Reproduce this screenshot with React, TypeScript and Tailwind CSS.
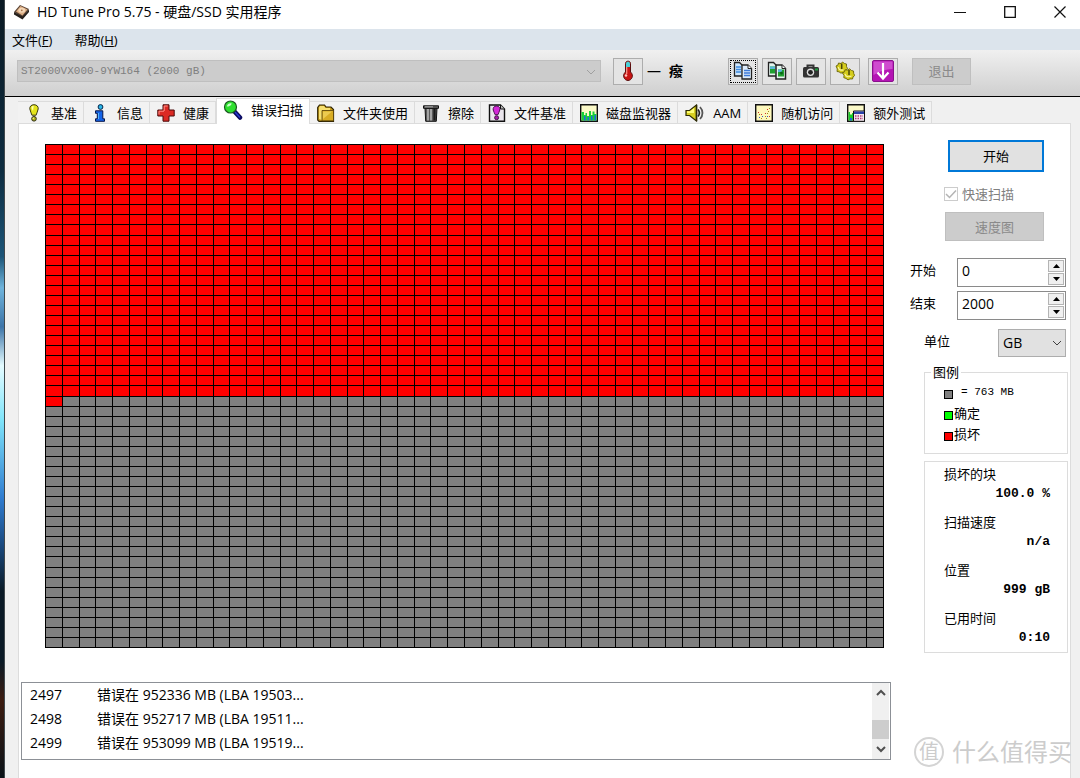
import { type ReactNode } from 'react'

const UI = "font-['Open_Sans','Noto_Sans_CJK_SC',sans-serif]"
const MONO = "font-['Liberation_Mono','Noto_Sans_CJK_SC',monospace]"

const COLS = 50
const ROWS = 50
const CELL_W = 16.76
const CELL_H = 10.06
const DAMAGED = 1251

/* ---------- icons ---------- */

function AppIcon() {
  return (
    <svg width="18" height="18" viewBox="0 0 18 18" aria-hidden="true">
      <path d="M1 9 7 2l9 4-6 9z" fill="#5a4334" />
      <path d="M3 8.500 7.500 3l7 3.500-5 6z" fill="#dcae84" />
      <path d="M1 9v2.500l8.500 5L16 9V6.500l-6.500 7z" fill="#26201c" />
      <ellipse cx="8.800" cy="7.300" rx="3.400" ry="2.500" fill="#f4d6b6" />
      <circle cx="8.800" cy="7.300" r=".9" fill="#a5714a" />
    </svg>
  )
}

function BenchmarkIcon() {
  return (
    <svg width="18" height="18" viewBox="0 0 18 18" aria-hidden="true">
      <path d="M9 .7c3 0 4.400 2 4.200 4.200-.3 2.400-1.700 4.200-2.100 6.300H6.900C6.500 9.100 5.100 7.300 4.800 4.900 4.600 2.700 6 .7 9 .7z" fill="#e4e41a" stroke="#3a3a10" />
      <path d="M6.500 4c.2-1.400 1-2.200 2.200-2.200L8 7z" fill="#ffffb0" />
      <circle cx="9" cy="14.800" r="2.300" fill="#b4b41a" stroke="#2a2a10" />
      <circle cx="8.300" cy="14.200" r=".8" fill="#f4f490" />
    </svg>
  )
}

function InfoIcon() {
  return (
    <svg width="18" height="18" viewBox="0 0 18 18" aria-hidden="true">
      <circle cx="9.500" cy="3" r="2.400" fill="#29b6e8" stroke="#06264a" />
      <path d="M4.500 6.800h7.300v8h1.700v2.500H4.500v-2.500h1.800V9.300H4.500z" fill="#1464e8" stroke="#06164a" />
      <path d="M7.500 9v6" stroke="#4fb4ff" />
    </svg>
  )
}

function HealthIcon() {
  return (
    <svg width="18" height="18" viewBox="0 0 18 18" aria-hidden="true">
      <path d="M6 .8h6v5.200h5.200v6H12v5.200H6V12H.8V6H6z" fill="#dc2a24" stroke="#4a0a0a" />
      <path d="M7.200 7V2h3.500M2 10.500V7.200h5" stroke="#ff9088" fill="none" />
    </svg>
  )
}

function ScanIcon() {
  return (
    <svg width="20" height="20" viewBox="0 0 20 20" aria-hidden="true">
      <path d="m11 11 6 6.500" stroke="#0a0a60" strokeWidth="4.500" strokeLinecap="round" />
      <path d="m12 12 5 5.500" stroke="#2a3ad0" strokeWidth="1.500" />
      <circle cx="7.500" cy="7" r="6" fill="#2fe02f" stroke="#1a5a20" strokeWidth="1.200" />
      <path d="M3.800 6.500C4.200 4 6.500 2.800 8.500 3.300c.6 1.500-2.500 3.800-4.700 3.200z" fill="#c8ffc8" />
    </svg>
  )
}

function FolderIcon() {
  return (
    <svg width="18" height="18" viewBox="0 0 18 18" aria-hidden="true">
      <path d="M.7 16V3.500L2.500 1h5L9 3h5l2.500 2.500v11.800H2z" fill="#c89c18" stroke="#2e2404" strokeWidth="1.200" />
      <path d="M2 3.500 3 2h4l1.500 2H13v2H5v10L2 15z" fill="#f7e070" />
      <path d="M5 6.500h11.500v10.300H5z" fill="#d8ac24" stroke="#54400a" strokeWidth=".8" />
      <path d="M6 7.500h9L6 15z" fill="#eccb50" />
    </svg>
  )
}

function TrashIcon() {
  return (
    <svg width="18" height="18" viewBox="0 0 18 18" aria-hidden="true">
      <path d="M3 4h12l-.7 13.300H3.700z" fill="#5c5c5c" stroke="#111" />
      <path d="M6 5v11.500M9 5v11.500" stroke="#c4c4c4" strokeWidth="1.400" />
      <path d="M12.500 5v11.500" stroke="#1a1a1a" strokeWidth="2.200" />
      <path d="M1.500 1.800h15v2.500h-15z" fill="#666" stroke="#111" />
      <path d="M3 2.800h8" stroke="#aaa" />
    </svg>
  )
}

function FileBenchIcon() {
  return (
    <svg width="18" height="18" viewBox="0 0 18 18" aria-hidden="true">
      <path d="M1.500 1h11l4 4v12.300h-15z" fill="#e9e5ec" stroke="#111" strokeWidth="1.400" />
      <path d="M12.500 1v4h4" fill="#bbb" stroke="#111" />
      <path d="M8.500 2c2.700 0 3.700 1.900 3.300 4-.3 1.900-1.500 3-1.800 4.700H7.100C6.800 9 5.500 7.900 5.200 6 4.900 3.900 5.900 2 8.500 2z" fill="#d428d8" stroke="#3c0840" strokeWidth=".9" />
      <circle cx="8.600" cy="13.700" r="2" fill="#a41ca8" stroke="#3c0840" strokeWidth=".9" />
    </svg>
  )
}

function MonitorIcon() {
  return (
    <svg width="18" height="18" viewBox="0 0 18 18" aria-hidden="true">
      <path d="M.7.7h16.600v16.600H.7z" fill="#fbf9c8" stroke="#111" strokeWidth="1.400" />
      <path d="M1.500 16.500V8H4v3h1.500V9H7v3h2V7h2v4h1.500V7.500h2V10h2v6.500z" fill="#18d038" />
      <path d="M4 16.500V12h1.500v4.500zM7.500 16.500V13h1.500v3.500zM11 16.500V12h1.500v4.500zM14.500 16.500V11H16v5.500z" fill="#1f6ad8" />
    </svg>
  )
}

function SpeakerIcon() {
  return (
    <svg width="20" height="18" viewBox="0 0 20 18" aria-hidden="true">
      <path d="M1 6.500h3.500L11.500 1v16l-7-5.500H1z" fill="#d8d020" stroke="#2c2a06" strokeWidth="1.200" />
      <path d="M2 7.200h3L9 4v5H2z" fill="#ffff78" />
      <path d="M11.500 1v16" stroke="#2c2a06" strokeWidth="1.600" />
      <path d="M13 5.500c1.600 2 1.600 5 0 7" fill="none" stroke="#222" strokeWidth="1.600" />
      <path d="M15 3c3.300 3.500 3.300 8.500 0 12" fill="none" stroke="#555" strokeWidth="1.800" />
    </svg>
  )
}

function RandomIcon() {
  return (
    <svg width="18" height="18" viewBox="0 0 18 18" aria-hidden="true">
      <path d="M.7.7h16.600v16.600H.7z" fill="#fdf8bc" stroke="#111" strokeWidth="1.400" />
      <path d="M3 8h1v1H3zM6 10h1v1H6zM12 5h1v1h-1zM10 9h1v1h-1zM14 12h1v1h-1z" fill="#d03030" />
      <path d="M7 12h1v1H7zM4 13h1v1H4zM12 12h1v1h-1z" fill="#3858c8" />
      <path d="M10 12h1v1h-1zM13 7h1v1h-1zM12 9h1v1h-1zM14 4h1v1h-1zM4 10h1v1H4zM11 14h1v1h-1zM6 14h1v1H6z" fill="#a08818" />
    </svg>
  )
}

function ExtraIcon() {
  return (
    <svg width="18" height="18" viewBox="0 0 18 18" aria-hidden="true">
      <path d="M.7.7h16.600v16.600H.7z" fill="#fbf9c8" stroke="#111" strokeWidth="1.400" />
      <path d="M1.500 16.500V8H3v2.500h2V9h1.500v7.500z" fill="#18c828" />
      <path d="M3 16.500V14h2v2.500z" fill="#1f62d8" />
      <path d="M6.500 7h11v10.300h-11z" fill="#f4e8f0" stroke="#111" />
      <path d="M7 7.500h10V10H7z" fill="#2840a8" />
      <path d="M8 12h8M8 14.500h8" stroke="#b03878" strokeWidth="1.300" strokeDasharray="1.500 1" />
    </svg>
  )
}

function ThermometerIcon() {
  return (
    <svg width="20" height="22" viewBox="0 0 20 22" aria-hidden="true">
      <path d="M7.500 3.500C7.500.4 12.500.4 12.500 3.500V12c4 3.500 1 8.500-2.500 8.500S3.500 15.500 7.500 12z" fill="#c81414" stroke="#5a1010" />
      <path d="M8 3.500C8 1 12 1 12 3.500V7H8z" fill="#48d0d8" />
      <path d="M8.700 7v7" stroke="#ff9a90" strokeWidth="1.200" />
      <circle cx="8" cy="15.500" r="1.300" fill="#ffc0b8" />
    </svg>
  )
}

function CopyTextIcon() {
  return (
    <svg width="20" height="20" viewBox="0 0 20 20" aria-hidden="true">
      <path d="M1.500 1.500h5l3 3V15h-8z" fill="#cfe6fb" stroke="#222" strokeWidth="1.300" />
      <path d="M3 6h5M3 8.500h5M3 11h5" stroke="#3c8ae0" strokeWidth="1.300" />
      <path d="M9 4h6l3.500 3.500V18H9z" fill="#dcebfa" stroke="#222" strokeWidth="1.300" />
      <path d="M15 4v3.500h3.500" fill="#fff" stroke="#222" />
      <path d="M11 9.500h6M11 12h6M11 14.500h6" stroke="#3c7ad8" strokeWidth="1.300" />
    </svg>
  )
}

function CopyImageIcon() {
  return (
    <svg width="20" height="20" viewBox="0 0 20 20" aria-hidden="true">
      <path d="M1.500 1.500h5l3 3V15h-8z" fill="#e4f4ee" stroke="#222" strokeWidth="1.300" />
      <path d="M3 5.500h5v7H3z" fill="#20a030" />
      <path d="M3 5.500h5V8H3z" fill="#58b8d8" />
      <path d="M9 4h6l3.500 3.500V18H9z" fill="#e4f4ee" stroke="#222" strokeWidth="1.500" />
      <path d="M15 4v3.500h3.500" fill="#fff" stroke="#222" />
      <path d="M11 8.500h6v7h-6z" fill="#20a030" />
      <path d="M11 8.500h4V11h-4z" fill="#58b8d8" />
      <circle cx="14.500" cy="12" r="1.500" fill="#0a6818" />
    </svg>
  )
}

function CameraIcon() {
  return (
    <svg width="20" height="20" viewBox="0 0 20 20" aria-hidden="true">
      <path d="M6.500 6V4.500h6V6" fill="none" stroke="#333" strokeWidth="2" />
      <rect x="2" y="6" width="16" height="10.500" rx="1.500" fill="#333" />
      <circle cx="9.500" cy="11.300" r="3.700" fill="#ddd" />
      <circle cx="9.500" cy="11.300" r="2.400" fill="#222" />
      <path d="M14 7.500h3v2h-3z" fill="#20a040" />
    </svg>
  )
}

function OptionsIcon() {
  return (
    <svg width="20" height="20" viewBox="0 0 20 20" aria-hidden="true">
      <g fill="#d4cc1c" stroke="#6a640a" strokeWidth=".9">
        <path d="m1 5 2-1 .5-2 2.500.5L7.500 1l2 1.500L11.500 3v2.500l1 2-1.500 2-.5 2-2.500-.3-2 1-2-1.400L2 10.500l.3-2.500z" />
        <path d="m7.500 12 2-1.200.5-2 2.500.2 2-1.200 2 1.700 2 .5.200 2.500 1 2-1.700 1.500-.5 2-2.500-.1-2 1-2-1.500-2.200-.7L9 14.500z" />
      </g>
      <path d="M6.700 2.500V8M14 9v5" stroke="#4a4608" strokeWidth="1.500" />
      <path d="M3.300 6c.2 2.500 2.200 3.700 5.200 3M10 13c.7 2.700 3.500 3.500 6.500 2" fill="none" stroke="#f8f4a0" strokeWidth="1.200" />
    </svg>
  )
}

function DownloadIcon() {
  return (
    <svg width="22" height="22" viewBox="0 0 22 22" aria-hidden="true">
      <rect x=".5" y=".5" width="21" height="21" rx="1.500" fill="#b414b4" stroke="#8a108c" />
      <path d="M1.500 1.500h19V9c-6 0-13 2-19 6z" fill="#cf4ccf" />
      <path d="M11 3v14M5.500 12.500 11 18.500l5.500-6" fill="none" stroke="#fff" strokeWidth="2.200" />
    </svg>
  )
}

function Chevron({ up = false, className = '' }: { up?: boolean; className?: string }) {
  return (
    <svg width="10" height="8" viewBox="0 0 10 8" fill="none" stroke="currentColor" className={className} aria-hidden="true">
      <path d={up ? 'm1 6 4-4 4 4' : 'm1 2 4 4 4-4'} />
    </svg>
  )
}

/* ---------- data ---------- */

interface Tab {
  label: string
  icon: ReactNode
  active?: boolean
}

const TABS: Tab[] = [
  { label: '基准', icon: <BenchmarkIcon /> },
  { label: '信息', icon: <InfoIcon /> },
  { label: '健康', icon: <HealthIcon /> },
  { label: '错误扫描', icon: <ScanIcon />, active: true },
  { label: '文件夹使用', icon: <FolderIcon /> },
  { label: '擦除', icon: <TrashIcon /> },
  { label: '文件基准', icon: <FileBenchIcon /> },
  { label: '磁盘监视器', icon: <MonitorIcon /> },
  { label: 'AAM', icon: <SpeakerIcon /> },
  { label: '随机访问', icon: <RandomIcon /> },
  { label: '额外测试', icon: <ExtraIcon /> },
]

const ERRORS = [
  { id: 2497, text: '错误在 952336 MB (LBA 19503...' },
  { id: 2498, text: '错误在 952717 MB (LBA 19511...' },
  { id: 2499, text: '错误在 953099 MB (LBA 19519...' },
]

const STATS = [
  { label: '损坏的块', value: '100.0 %' },
  { label: '扫描速度', value: 'n/a' },
  { label: '位置', value: '999 gB' },
  { label: '已用时间', value: '0:10' },
]

/* ---------- parts ---------- */

function TitleBar() {
  return (
    <header className="flex h-[29px] items-start justify-between bg-white pl-2">
      <div className="flex h-6 items-center gap-1.5">
        <AppIcon />
        <h1 className="text-[14px] leading-5 text-black">HD Tune Pro 5.75 - 硬盘/SSD 实用程序</h1>
      </div>
      <div className="flex h-6 items-center gap-[10px]">
        <button type="button" aria-label="Minimize" className="flex w-10 justify-center">
          <svg width="12" height="12" viewBox="0 0 12 12" stroke="#111"><path d="M0 6.500h12" /></svg>
        </button>
        <button type="button" aria-label="Maximize" className="flex w-10 justify-center">
          <svg width="12" height="12" viewBox="0 0 12 12" fill="none" stroke="#111" strokeWidth="1.300"><path d="M.7.7h10.600v10.600H.7z" /></svg>
        </button>
        <button type="button" aria-label="Close" className="flex w-10 justify-center">
          <svg width="12" height="12" viewBox="0 0 12 12" stroke="#111" strokeWidth="1.200"><path d="m.5.5 11 11M11.500.5l-11 11" /></svg>
        </button>
      </div>
    </header>
  )
}

function MenuBar() {
  return (
    <nav className="flex h-[21px] items-center gap-[22px] bg-[#dce4ec] pl-[7px] text-[13px] leading-5 text-black">
      <button type="button">文件(<u>F</u>)</button>
      <button type="button">帮助(<u>H</u>)</button>
    </nav>
  )
}

function ToolButton({ label, focused, children }: { label: string; focused?: boolean; children: ReactNode }) {
  return (
    <button
      type="button"
      aria-label={label}
      className="flex h-[27px] w-[30px] items-center justify-center border border-[#adadad] bg-[#e4e4e4] p-px"
    >
      <span
        className={[
          'flex h-full w-full items-center justify-center',
          focused ? 'border border-dotted border-black' : '',
        ].join(' ')}
      >
        {children}
      </span>
    </button>
  )
}

function Toolbar() {
  return (
    <div className="flex h-[47px] items-center border-b border-black bg-linear-to-b from-[#f0f0f0] to-[#cfcfcf] pr-[109px] pb-1 pl-3">
      <div className="relative flex-1">
        <select
          disabled
          aria-label="Drive"
          className={`${MONO} block h-[22px] w-full appearance-none border border-[#bfbfbf] bg-[#cccccc] pl-[3px] text-[11px] text-[#808080] opacity-100`}
        >
          <option>ST2000VX000-9YW164 (2000 gB)</option>
        </select>
        <Chevron className="pointer-events-none absolute top-2 right-[5px] text-[#a0a0a0]" />
      </div>
      <div className="ml-3 flex items-center">
        <ToolButton label="Temperature"><ThermometerIcon /></ToolButton>
        <span className="ml-1 flex w-[81px] items-center gap-2 text-[14px] leading-5 text-black">
          <span>—</span>
          <span className="font-bold">癈</span>
        </span>
      </div>
      <div className="flex items-center gap-1">
        <ToolButton label="Copy text" focused><CopyTextIcon /></ToolButton>
        <ToolButton label="Copy image"><CopyImageIcon /></ToolButton>
        <ToolButton label="Screenshot"><CameraIcon /></ToolButton>
        <ToolButton label="Options"><OptionsIcon /></ToolButton>
      </div>
      <div className="ml-2 flex items-center gap-[14px]">
        <ToolButton label="Save"><DownloadIcon /></ToolButton>
        <button type="button" disabled className="h-[27px] w-[59px] border border-[#bfbfbf] bg-[#cccccc] text-[13px] leading-5 text-[#8a8a8a]">
          退出
        </button>
      </div>
    </div>
  )
}

function TabStrip() {
  return (
    <div role="tablist" className="flex h-[26px] items-end pl-[13px] text-[13px] leading-5 text-black">
      {TABS.map((tab) => (
        <button
          key={tab.label}
          type="button"
          role="tab"
          aria-selected={!!tab.active}
          className={[
            'flex items-center gap-2 whitespace-nowrap pr-[6px]',
            tab.active
              ? 'relative z-10 -mb-px h-[26px] border-x border-t border-[#dcdcdc] bg-white pb-1 pl-[6px]'
              : 'h-[22px] border-t border-r border-[#dcdcdc] bg-[#f2f2f2] pl-[7px]',
          ].join(' ')}
        >
          {tab.icon}
          <span>{tab.label}</span>
        </button>
      ))}
    </div>
  )
}

function BlockMap() {
  const w = COLS * CELL_W
  const h = ROWS * CELL_H
  const fullRows = Math.floor(DAMAGED / COLS)
  const rest = DAMAGED % COLS

  return (
    <svg viewBox="0 0 839 504" className="block h-auto w-full" shapeRendering="crispEdges" role="img" aria-label="错误扫描">
      <rect width={w} height={h} fill="#808080" />
      <rect width={w} height={fullRows * CELL_H} fill="#ff0000" />
      <rect y={fullRows * CELL_H} width={rest * CELL_W} height={CELL_H} fill="#ff0000" />
      <g stroke="#000">
        {Array.from({ length: COLS + 1 }, (_, i) => {
          const x = Math.round(i * CELL_W) + 0.5
          return <line key={i} x1={x} x2={x} y1="0" y2={h + 1} />
        })}
        {Array.from({ length: ROWS + 1 }, (_, i) => {
          const y = Math.round(i * CELL_H) + 0.5
          return <line key={i} x1="0" x2={w + 1} y1={y} y2={y} />
        })}
      </g>
    </svg>
  )
}

function ErrorList() {
  return (
    <div className="flex h-[78px] border border-[#8c9096] bg-white pr-px">
      <div className="flex-1 overflow-hidden">
        <table className="text-[14px] text-black">
          <tbody>
            {ERRORS.map((row) => (
              <tr key={row.id} className="h-6">
                <td className="w-[75px] py-0 pl-2 leading-5">{row.id}</td>
                <td className="py-0 leading-5 whitespace-nowrap">{row.text}</td>
              </tr>
            ))}
          </tbody>
        </table>
      </div>
      <div className="flex w-[17px] flex-col bg-[#f0f0f0] text-[#505050]">
        <button type="button" aria-label="Scroll up" className="flex h-5 items-center justify-center">
          <Chevron up className="stroke-2" />
        </button>
        <div className="flex flex-1 flex-col justify-end">
          <div className="h-[19px] bg-[#cdcdcd]" />
        </div>
        <button type="button" aria-label="Scroll down" className="flex h-5 items-center justify-center">
          <Chevron className="stroke-2" />
        </button>
      </div>
    </div>
  )
}

function SpinField({ id, label, value }: { id: string; label: string; value: string }) {
  return (
    <div className="flex items-center justify-between pr-[2px]">
      <label htmlFor={id} className="pb-1.5">{label}</label>
      <div className="flex h-[29px] w-[109px] border border-[#8a8a8a] bg-white">
        <input id={id} type="text" defaultValue={value} className="w-full min-w-0 flex-1 pb-1 pl-1 text-[14px] outline-none" />
        <div className="flex w-[18px] flex-col gap-px p-px">
          <button type="button" aria-label="Increase" className="flex flex-1 items-center justify-center border border-[#b4b4b4] bg-[#f0f0f0]">
            <svg width="7" height="4" viewBox="0 0 7 4"><path d="M0 4 3.500 0 7 4z" /></svg>
          </button>
          <button type="button" aria-label="Decrease" className="flex flex-1 items-center justify-center border border-[#b4b4b4] bg-[#f0f0f0]">
            <svg width="7" height="4" viewBox="0 0 7 4"><path d="m0 0 3.500 4L7 0z" /></svg>
          </button>
        </div>
      </div>
    </div>
  )
}

function Legend() {
  const swatch = 'size-[9px] border border-black'
  return (
    <fieldset className="ml-[14px] h-[92px] border border-[#dcdcdc] pl-[19px]">
      <legend className="-ml-[13px] px-[2px] leading-5">图例</legend>
      <ul className="leading-[21px]">
        <li className="flex items-center">
          <span className={`${swatch} mt-1 bg-[#808080]`} />
          <span className={`${MONO} ml-2 text-[11px] whitespace-pre`}>= 763 MB</span>
        </li>
        <li className="flex items-center">
          <span className={`${swatch} mt-1 bg-[#00ff00]`} />
          <span className="ml-px">确定</span>
        </li>
        <li className="flex items-center">
          <span className={`${swatch} mt-1 bg-[#ff0000]`} />
          <span className="ml-px">损坏</span>
        </li>
      </ul>
    </fieldset>
  )
}

function Sidebar() {
  return (
    <aside className="flex w-[158px] shrink-0 flex-col pt-4 text-[13px] leading-5 text-black">
      <button type="button" className="ml-[38px] h-8 w-24 border-2 border-[#0078d7] bg-[#e1e1e1]">开始</button>
      <label className="mt-3 ml-[34px] flex items-center gap-1 text-[#808080]">
        <span className="relative flex size-[14px]">
          <input type="checkbox" defaultChecked disabled className="size-[14px] appearance-none border border-[#cccccc] bg-white" />
          <svg width="12" height="10" viewBox="0 0 12 10" fill="none" stroke="#b4b4b4" strokeWidth="1.500" className="pointer-events-none absolute top-[2px] left-px">
            <path d="m1 5 3.500 3.500L11 1.500" />
          </svg>
        </span>
        快速扫描
      </label>
      <button type="button" disabled className="mt-2 ml-[35px] h-[29px] w-[99px] border border-[#bfbfbf] bg-[#cccccc] text-[#8a8a8a]">
        速度图
      </button>
      <div className="mt-[17px] flex flex-col gap-1">
        <SpinField id="start" label="开始" value="0" />
        <SpinField id="end" label="结束" value="2000" />
      </div>
      <div className="mt-[9px] flex items-center justify-between pr-[2px] pl-[14px]">
        <label htmlFor="unit" className="pb-1">单位</label>
        <div className="relative">
          <select id="unit" className="block h-7 w-[68px] appearance-none border border-[#adadad] bg-[#e1e1e1] pl-1 text-[14px]">
            <option>GB</option>
          </select>
          <Chevron className="pointer-events-none absolute top-[10px] right-1 text-[#404040]" />
        </div>
      </div>
      <div className="mt-[5px]">
        <Legend />
      </div>
      <dl className="mt-[7px] ml-[14px] flex flex-col gap-2 border border-[#dcdcdc] pt-[2px] pr-[17px] pb-1 pl-[19px]">
        {STATS.map((s) => (
          <div key={s.label}>
            <dt>{s.label}</dt>
            <dd className={`${MONO} text-right text-[13px] font-bold whitespace-pre`}>{s.value}</dd>
          </div>
        ))}
      </dl>
    </aside>
  )
}

function Watermark() {
  return (
    <div className="pointer-events-none absolute right-2 bottom-[10px] flex items-center gap-2 text-[#cccccc]">
      <span className="flex size-[30px] items-center justify-center rounded-full border-2 border-[#d4d4d4] text-[20px] leading-6">值</span>
      <span className="text-[24px] leading-8">什么值得买</span>
    </div>
  )
}

export default function App() {
  return (
    <div className={`${UI} flex min-h-screen bg-[#f0f0f0]`}>
      {/* strip of desktop wallpaper left of the window */}
      <div className="w-[5px] shrink-0 border-r border-[#40484c] bg-[linear-gradient(to_bottom,#0b1a24_0%,#0d2c40_22%,#1c5578_33%,#6fb4dc_37%,#3c74a8_42%,#e4fbff_47%,#7fe4fa_54%,#2f7cd0_64%,#1a4a80_70%,#0a1a26_76%,#0a1a26_85%,#3c1c10_90%,#0a1218_100%)]" />
      <div className="flex min-w-0 flex-1 flex-col">
        <TitleBar />
        <MenuBar />
        <Toolbar />
        <TabStrip />
        <main className="mr-[9px] ml-[13px] flex flex-1 gap-[19px] border-x border-t border-[#dcdcdc] bg-white px-[2px]">
          <div className="flex min-w-0 flex-1 flex-col gap-[34px] pt-5">
            <div className="pr-[7px] pl-6">
              <BlockMap />
            </div>
            <ErrorList />
          </div>
          <Sidebar />
        </main>
      </div>
      <Watermark />
    </div>
  )
}
